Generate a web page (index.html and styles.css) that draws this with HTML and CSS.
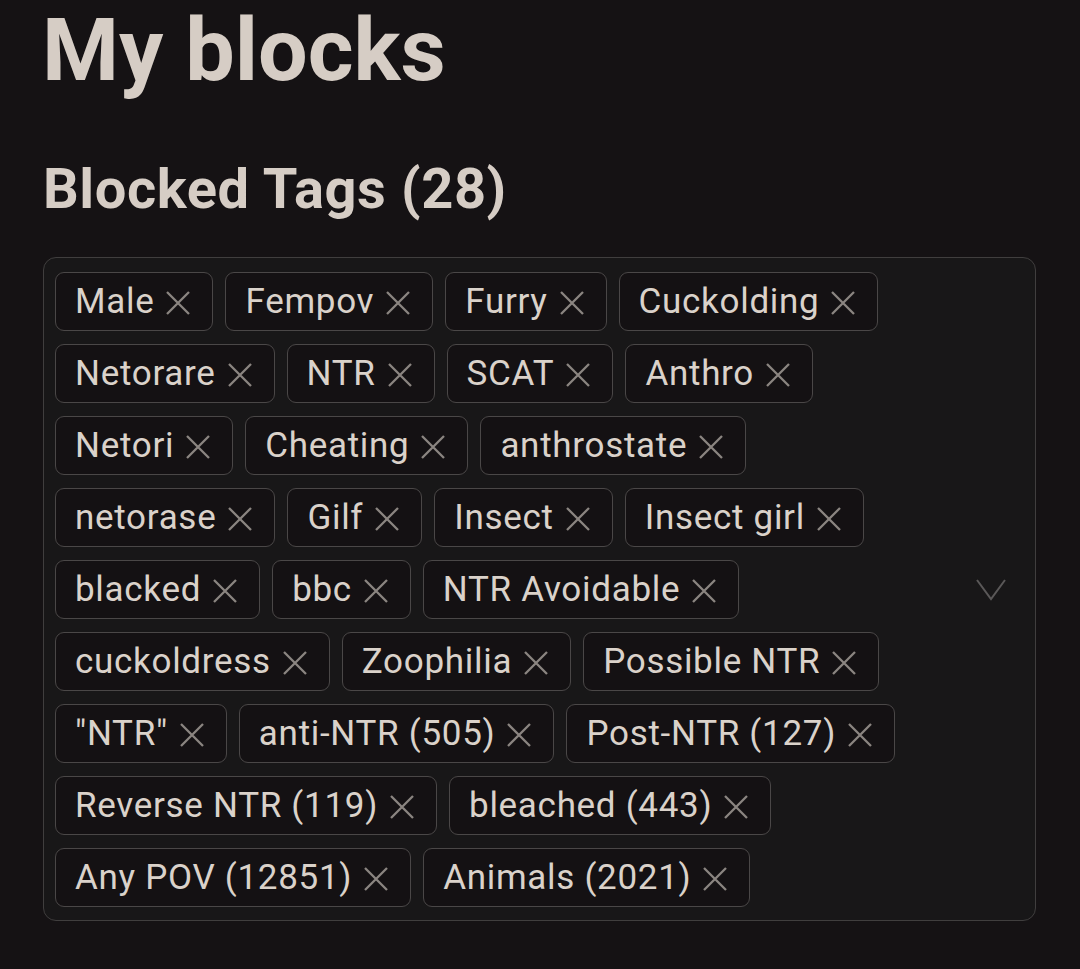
FILE: index.html
```html
<!DOCTYPE html>
<html lang="en">
<head>
<meta charset="utf-8">
<title>My blocks</title>
<link rel="stylesheet" href="styles.css">
</head>
<body>
<main class="page">
  <h1 class="title">My blocks</h1>
  <h2 class="subtitle">Blocked Tags (28)</h2>
  <div class="select">
    <div class="tags">
      <span class="tag">Male<svg class="x" viewBox="0 0 24 24"><path d="M1 1L23 23M23 1L1 23"/></svg></span>
      <span class="tag">Fempov<svg class="x" viewBox="0 0 24 24"><path d="M1 1L23 23M23 1L1 23"/></svg></span>
      <span class="tag">Furry<svg class="x" viewBox="0 0 24 24"><path d="M1 1L23 23M23 1L1 23"/></svg></span>
      <span class="tag">Cuckolding<svg class="x" viewBox="0 0 24 24"><path d="M1 1L23 23M23 1L1 23"/></svg></span>
      <span class="tag">Netorare<svg class="x" viewBox="0 0 24 24"><path d="M1 1L23 23M23 1L1 23"/></svg></span>
      <span class="tag">NTR<svg class="x" viewBox="0 0 24 24"><path d="M1 1L23 23M23 1L1 23"/></svg></span>
      <span class="tag">SCAT<svg class="x" viewBox="0 0 24 24"><path d="M1 1L23 23M23 1L1 23"/></svg></span>
      <span class="tag">Anthro<svg class="x" viewBox="0 0 24 24"><path d="M1 1L23 23M23 1L1 23"/></svg></span>
      <span class="tag">Netori<svg class="x" viewBox="0 0 24 24"><path d="M1 1L23 23M23 1L1 23"/></svg></span>
      <span class="tag">Cheating<svg class="x" viewBox="0 0 24 24"><path d="M1 1L23 23M23 1L1 23"/></svg></span>
      <span class="tag">anthrostate<svg class="x" viewBox="0 0 24 24"><path d="M1 1L23 23M23 1L1 23"/></svg></span>
      <span class="tag">netorase<svg class="x" viewBox="0 0 24 24"><path d="M1 1L23 23M23 1L1 23"/></svg></span>
      <span class="tag">Gilf<svg class="x" viewBox="0 0 24 24"><path d="M1 1L23 23M23 1L1 23"/></svg></span>
      <span class="tag">Insect<svg class="x" viewBox="0 0 24 24"><path d="M1 1L23 23M23 1L1 23"/></svg></span>
      <span class="tag">Insect girl<svg class="x" viewBox="0 0 24 24"><path d="M1 1L23 23M23 1L1 23"/></svg></span>
      <span class="tag">blacked<svg class="x" viewBox="0 0 24 24"><path d="M1 1L23 23M23 1L1 23"/></svg></span>
      <span class="tag">bbc<svg class="x" viewBox="0 0 24 24"><path d="M1 1L23 23M23 1L1 23"/></svg></span>
      <span class="tag">NTR Avoidable<svg class="x" viewBox="0 0 24 24"><path d="M1 1L23 23M23 1L1 23"/></svg></span>
      <span class="tag">cuckoldress<svg class="x" viewBox="0 0 24 24"><path d="M1 1L23 23M23 1L1 23"/></svg></span>
      <span class="tag">Zoophilia<svg class="x" viewBox="0 0 24 24"><path d="M1 1L23 23M23 1L1 23"/></svg></span>
      <span class="tag">Possible NTR<svg class="x" viewBox="0 0 24 24"><path d="M1 1L23 23M23 1L1 23"/></svg></span>
      <span class="tag">"NTR"<svg class="x" viewBox="0 0 24 24"><path d="M1 1L23 23M23 1L1 23"/></svg></span>
      <span class="tag">anti-NTR (505)<svg class="x" viewBox="0 0 24 24"><path d="M1 1L23 23M23 1L1 23"/></svg></span>
      <span class="tag">Post-NTR (127)<svg class="x" viewBox="0 0 24 24"><path d="M1 1L23 23M23 1L1 23"/></svg></span>
      <span class="tag">Reverse NTR (119)<svg class="x" viewBox="0 0 24 24"><path d="M1 1L23 23M23 1L1 23"/></svg></span>
      <span class="tag">bleached (443)<svg class="x" viewBox="0 0 24 24"><path d="M1 1L23 23M23 1L1 23"/></svg></span>
      <span class="tag">Any POV (12851)<svg class="x" viewBox="0 0 24 24"><path d="M1 1L23 23M23 1L1 23"/></svg></span>
      <span class="tag">Animals (2021)<svg class="x" viewBox="0 0 24 24"><path d="M1 1L23 23M23 1L1 23"/></svg></span>
    </div>
    <div class="chevron-box">
      <svg class="chevron" viewBox="0 0 30 22"><path d="M1 1L15 20L29 1"/></svg>
    </div>
  </div>
</main>
</body>
</html>
```

FILE: styles.css
```css
html, body {
  margin: 0;
  padding: 0;
  background: #151214;
}

body {
  font-family: Roboto, "Noto Sans", sans-serif;
  color: #d8d0c8;
  height: 969px;
  overflow: hidden;
}

.page {
  padding: 0 44px 0 43px;
}

.title {
  margin: 6px 0 0 -1px;
  font-size: 88px;
  line-height: 88px;
  font-weight: 700;
  color: #d6cdc5;
}

.subtitle {
  margin: 67px 0 0 0;
  font-size: 56px;
  line-height: 56px;
  font-weight: 700;
  letter-spacing: 0.6px;
  color: #d6cdc5;
}

.select {
  margin-top: 40px;
  display: flex;
  align-items: center;
  border: 1px solid #403e3e;
  border-radius: 13px;
  background: #181718;
  padding: 14px 0 13px 11px;
}

.tags {
  flex: 1;
  display: flex;
  flex-wrap: wrap;
  gap: 13px 12px;
}

.tag {
  box-sizing: border-box;
  height: 59px;
  display: inline-flex;
  align-items: center;
  gap: 12px;
  padding: 0 22px 0 19px;
  border: 1px solid #4a4747;
  border-radius: 9px;
  background: #141113;
  font-size: 35px;
  letter-spacing: 0.7px;
  color: #dad2ca;
  white-space: nowrap;
}

.x {
  width: 24px;
  height: 24px;
  flex: none;
  stroke: #8b8581;
  stroke-width: 2.3;
  fill: none;
  margin-top: 2px;
}

.chevron-box {
  flex: none;
  width: 30px;
  margin: 0 29px 0 16px;
  display: flex;
  align-items: center;
}

.chevron {
  width: 30px;
  height: 22px;
  stroke: #5a5858;
  stroke-width: 2;
  fill: none;
}
```
